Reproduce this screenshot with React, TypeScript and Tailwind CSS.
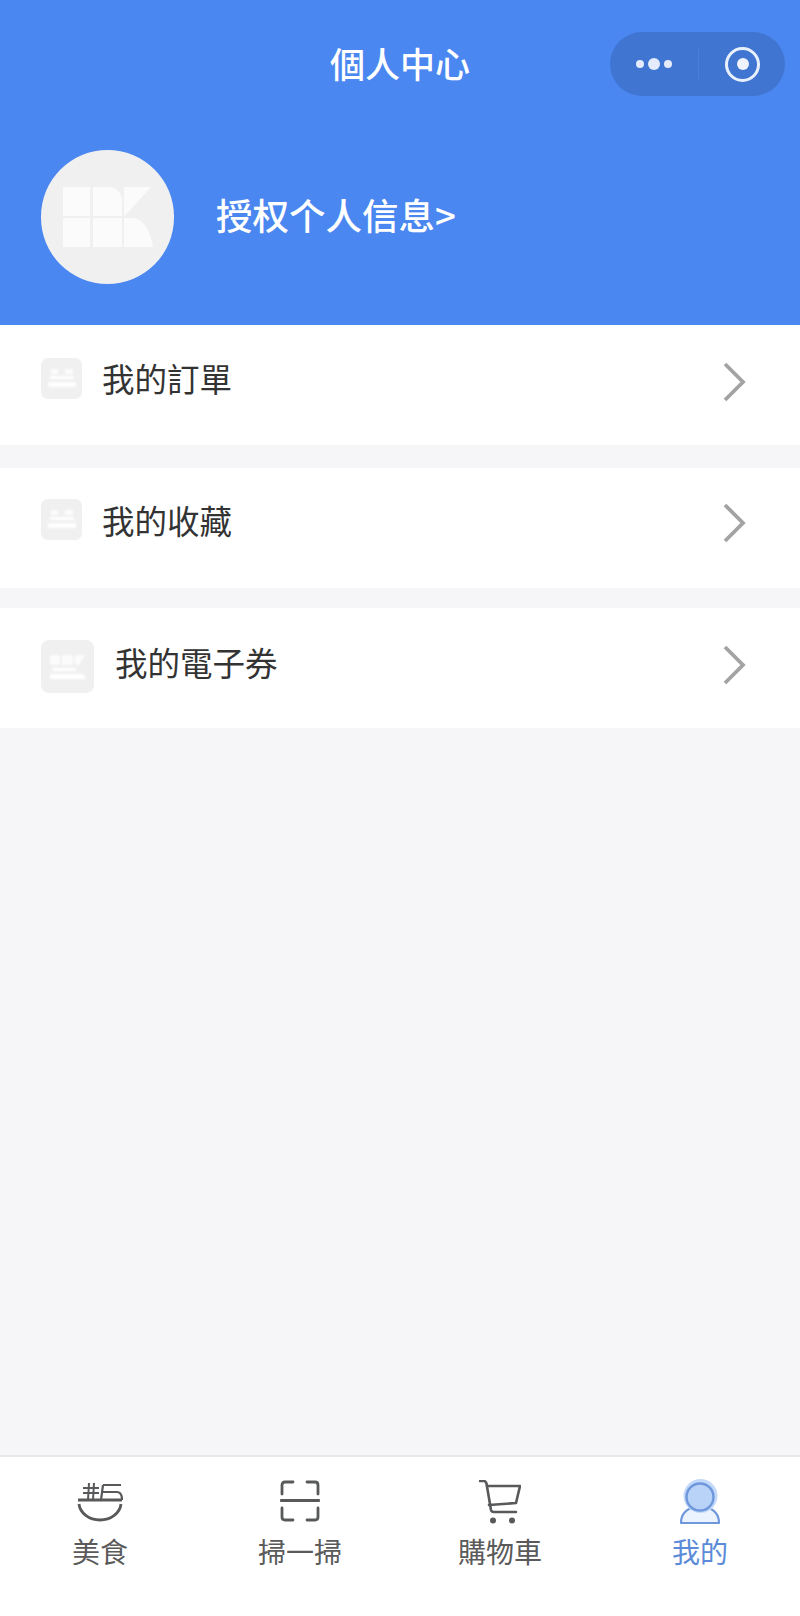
import React from "react";

function Logo({ className }: { className: string }) {
  return (
    <svg viewBox="0 0 90 60" className={className} fill="currentColor">
      <rect x="0" y="0" width="27" height="29" />
      <rect x="0" y="31" width="27" height="29" />
      <path d="M30 0h15c8 0 14 6 14 14v15H30z" />
      <rect x="30" y="31" width="29" height="29" />
      <path d="M61 0h27L70 20l-9 9z" />
      <path d="M61 31h9c10 0 18 14 20 29H61z" />
    </svg>
  );
}

function SmallMark({ wide }: { wide?: boolean }) {
  return wide ? (
    <div className="w-[53px] h-[53px] rounded-[8px] bg-[#f0f0f1] flex items-center justify-center">
      <svg viewBox="0 0 36 24" className="w-[36px] h-[24px] text-white blur-[1px]" fill="currentColor">
        <rect x="0" y="0" width="10" height="10" opacity="0.8" />
        <rect x="12" y="0" width="11" height="10" opacity="0.8" />
        <path d="M25 0h10l-6 10h-4z" opacity="0.8" />
        <rect x="2" y="13" width="24" height="3" />
        <path d="M0 19h33l3 5H0z" />
      </svg>
    </div>
  ) : (
    <div className="w-[41px] h-[41px] rounded-[7px] bg-[#f0f0f1] flex items-center justify-center">
      <svg viewBox="0 0 28 18" className="w-[28px] h-[18px] text-white blur-[1px]" fill="currentColor">
        <rect x="3" y="0" width="7" height="5" opacity="0.8" />
        <rect x="17" y="0" width="8" height="5" opacity="0.8" />
        <rect x="2" y="7" width="24" height="3" />
        <rect x="0" y="13" width="28" height="5" opacity="0.9" />
      </svg>
    </div>
  );
}

function Chevron() {
  return (
    <svg viewBox="0 0 24 40" className="w-[24px] h-[40px] text-[#a3a3a3]" fill="none" stroke="currentColor" strokeWidth="3.8">
      <path d="M3 2l18 18L3 38" />
    </svg>
  );
}

function Row({
  label,
  wide,
  className,
  iconOffset,
  textOffset,
  chevronOffset,
}: {
  label: string;
  wide?: boolean;
  className: string;
  iconOffset: string;
  textOffset: string;
  chevronOffset: string;
}) {
  return (
    <div className={`bg-white flex items-center pl-[41px] pr-[54px] ${className}`}>
      <div className={iconOffset}>
        <SmallMark wide={wide} />
      </div>
      <span className={`text-[32.500px] leading-[44px] text-[#333333] ${wide ? "ml-[21px]" : "ml-[20px]"} ${textOffset}`}>{label}</span>
      <span className={`ml-auto flex ${chevronOffset}`}>
        <Chevron />
      </span>
    </div>
  );
}

function BowlIcon() {
  return (
    <svg viewBox="0 0 46 42" className="w-[46px] h-[42px]" fill="none" stroke="#58595b" strokeWidth="2.4">
      <path d="M1 19h44" strokeWidth="2.8" />
      <path d="M6 7h16M6 12h16M12 2l-1 17M17 2l-1 17" strokeWidth="2" />
      <path d="M26 4h18M26 4l-2 15M25 11h15c3 0 5 3 5 8" strokeWidth="2.2" />
      <path d="M2 23c1 9 10 16 21 16s20-7 21-16" strokeWidth="2.8" />
    </svg>
  );
}

function ScanIcon() {
  return (
    <svg viewBox="0 0 40 42" className="w-[40px] h-[42px] -translate-y-[1px]" fill="none" stroke="#58595b" strokeWidth="2.8" strokeLinecap="round" strokeLinejoin="round">
      <path d="M13 2H5C3 2 2 3 2 5v9" />
      <path d="M27 2h8c2 0 3 1 3 3v9" />
      <path d="M1 20.500h38" />
      <path d="M2 28v9c0 2 1 3 3 3h8" />
      <path d="M38 28v9c0 2-1 3-3 3h-8" />
    </svg>
  );
}

function CartIcon() {
  return (
    <svg viewBox="0 0 42 44" className="w-[42px] h-[44px]" fill="none" stroke="#58595b" strokeWidth="2.6" strokeLinecap="round" strokeLinejoin="round">
      <path d="M1 1h4c1.500 0 2 1 2.500 2.500L12 30c.3 1.500 1 2 3 2h22" />
      <path d="M8 6h33l-4 17-27 2" />
      <circle cx="14" cy="40.500" r="3" fill="#58595b" stroke="none" />
      <circle cx="33" cy="40.500" r="3" fill="#58595b" stroke="none" />
    </svg>
  );
}

function PersonIcon() {
  return (
    <svg viewBox="0 0 42 46" className="w-[42px] h-[46px]" fill="none">
      <path d="M2 44c0-9 6-14 13-16h12c7 2 13 7 13 16z" fill="#eaf3fe" stroke="#6f98dc" strokeWidth="2.200" strokeLinejoin="round" />
      <circle cx="21.500" cy="17" r="17" fill="#c3d9fa" />
      <circle cx="21" cy="18" r="13.500" fill="#b9d2f8" stroke="#6f98dc" strokeWidth="2.400" />
    </svg>
  );
}

function Tab({
  icon,
  label,
  active,
}: {
  icon: React.ReactNode;
  label: string;
  active?: boolean;
}) {
  return (
    <div className="flex flex-col items-center">
      <div className="h-[44px] flex items-center justify-center">{icon}</div>
      <span className={`mt-[8px] text-[28px] leading-[38px] ${active ? "text-[#5b8bd8]" : "text-[#5a5a5a]"}`}>{label}</span>
    </div>
  );
}

export default function App() {
  return (
    <div
      className="w-[800px] h-[1616px] flex flex-col bg-[#f6f6f8] overflow-hidden"
      style={{ fontFamily: '"Noto Sans CJK TC", "Noto Sans CJK SC", "Liberation Sans", sans-serif' }}
    >
      <header className="h-[325px] shrink-0 bg-[#4b87f0] pt-[32px] text-white">
        <div className="grid grid-cols-[1fr_auto_1fr] items-center px-[15px]">
          <div />
          <h1 className="text-[35px] leading-[62px] font-medium mb-[2px]">個人中心</h1>
          <div className="justify-self-end w-[175px] h-[64px] rounded-full bg-[#4175d2] flex items-center">
            <div className="w-[88px] pr-[26px] flex items-center justify-end gap-[4px]">
              <span className="w-[8px] h-[8px] rounded-full bg-[#e4ecfb]" />
              <span className="w-[12px] h-[12px] rounded-full bg-[#e4ecfb]" />
              <span className="w-[8px] h-[8px] rounded-full bg-[#e4ecfb]" />
            </div>
            <div className="w-[1px] h-[30px] bg-[#4a80dc]" />
            <div className="ml-[26px] w-[35px] h-[35px] rounded-full border-[3.500px] border-[#e8f0fd] flex items-center justify-center">
              <span className="w-[12px] h-[12px] rounded-full bg-[#eef3fc]" />
            </div>
          </div>
        </div>
        <div className="mt-[54px] ml-[41px] flex items-center">
          <div className="w-[133px] h-[134px] rounded-full bg-[#f0f0f0] flex items-center justify-center">
            <Logo className="w-[90px] h-[60px] text-[#fbfbfb] blur-[0.5px]" />
          </div>
          <span className="ml-[42px] text-[36.500px] leading-[50px] font-medium mb-[4px]">授权个人信息&gt;</span>
        </div>
      </header>

      <Row
        label="我的訂單"
        className="h-[120px] pb-[10px]"
        iconOffset="mb-[4px]"
        textOffset="mb-[4px]"
        chevronOffset="mt-[4px]"
      />
      <Row
        label="我的收藏"
        className="h-[120px] mt-[23px] pb-[6px]"
        iconOffset="mb-[12px]"
        textOffset="mb-[10px]"
        chevronOffset="mb-[4px]"
      />
      <Row
        label="我的電子券"
        wide
        className="h-[120px] mt-[20px] pb-[7px]"
        iconOffset="mt-[4px]"
        textOffset="mb-[6px]"
        chevronOffset=""
      />

      <footer className="mt-auto h-[161px] shrink-0 bg-white border-t-2 border-[#e9e9eb] grid grid-cols-4 pt-[23px]">
        <Tab icon={<BowlIcon />} label="美食" />
        <Tab icon={<ScanIcon />} label="掃一掃" />
        <Tab icon={<CartIcon />} label="購物車" />
        <Tab icon={<PersonIcon />} label="我的" active />
      </footer>
    </div>
  );
}
